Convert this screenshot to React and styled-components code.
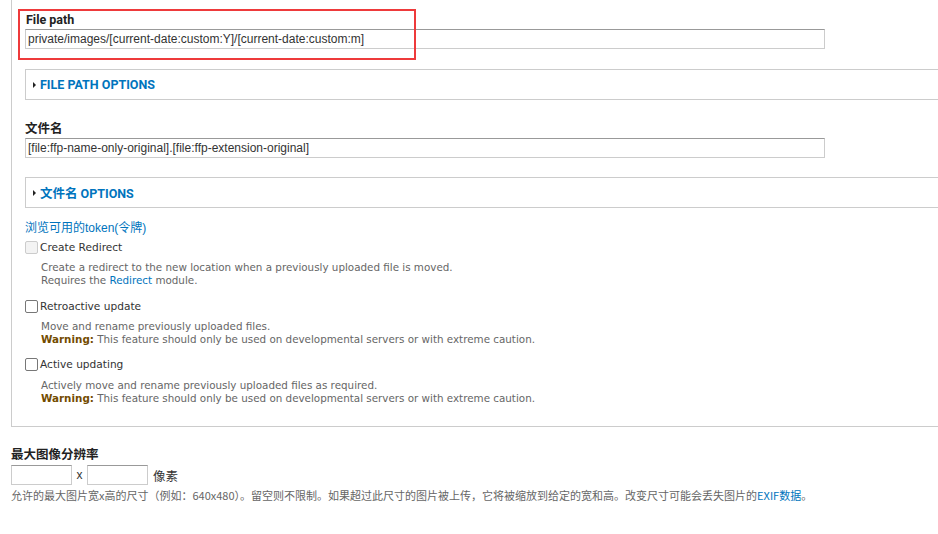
import React from "react";
import styled, { createGlobalStyle } from "styled-components";

const Global = createGlobalStyle`
  html, body { margin: 0; padding: 0; background: #fff; }
  body { overflow: hidden; width: 938px; height: 534px; }
`;

const Page = styled.div`
  padding-left: 11px;
  font-family: "DejaVu Sans", Verdana, sans-serif;
  color: #333;
`;

const Panel = styled.div`
  position: relative;
  margin-right: -30px;
  border-left: 1px solid #ccc;
  border-bottom: 1px solid #ccc;
  padding: 11px 0 21px 13px;
`;

const Highlight = styled.div`
  position: absolute;
  left: 6px;
  top: 9px;
  width: 398px;
  height: 51px;
  box-sizing: border-box;
  border: 2px solid #ee3a3b;
  pointer-events: none;
`;

const FieldLabel = styled.div`
  font-family: "Roboto", "Noto Sans CJK SC", sans-serif;
  font-weight: bold;
  font-size: 12.5px;
  line-height: 18px;
  color: #222;
  margin-top: ${(p) => p.$mt || 0}px;
  padding-left: ${(p) => p.$pl || 0}px;
`;

const TextInput = styled.div`
  box-sizing: border-box;
  width: ${(p) => p.$w}px;
  height: 20px;
  border: 1px solid #ccc;
  border-top-color: #999;
  font-family: "Liberation Sans", Arial, sans-serif;
  font-size: 12px;
  line-height: 18px;
  padding-left: 2px;
  color: #333;
  white-space: nowrap;
`;

const Details = styled.div`
  box-sizing: border-box;
  height: 31px;
  margin-top: ${(p) => p.$mt}px;
  border: 1px solid #ccc;
  border-right: none;
  display: flex;
  align-items: center;
  padding-left: 7px;
  gap: 4px;
`;

const Triangle = styled.span`
  width: 0;
  height: 0;
  border-top: 3px solid transparent;
  border-bottom: 3px solid transparent;
  border-left: 3px solid #222;
`;

const Summary = styled.span`
  font-family: "Roboto", "Noto Sans CJK SC", sans-serif;
  font-weight: bold;
  font-size: 12.5px;
  color: #0074bd;
`;

const TokenLink = styled.div`
  margin-top: 12px;
  font-family: "Liberation Sans", "Noto Sans CJK SC", sans-serif;
  font-size: 12px;
  line-height: 16px;
  color: #0074bd;
`;

const CheckRow = styled.label`
  display: flex;
  align-items: center;
  gap: 2px;
  margin-top: ${(p) => p.$mt}px;
  font-size: 10.6px;
  line-height: 16px;
  color: #333;
`;

const Box = styled.span`
  box-sizing: border-box;
  width: 13px;
  height: 13px;
  border: 1px solid ${(p) => (p.$disabled ? "#ccc" : "#777")};
  background: ${(p) => (p.$disabled ? "#f3f3f3" : "#fff")};
  border-radius: 2px;
`;

const Desc = styled.div`
  margin-top: ${(p) => p.$mt || 6}px;
  padding-left: 16px;
  font-size: 10.35px;
  line-height: 13px;
  color: #666;
`;

const Link = styled.span`
  color: #0074bd;
`;

const Warn = styled.strong`
  color: #734c00;
`;

const DimRow = styled.div`
  display: flex;
  align-items: center;
  margin-top: 1px;
  font-family: "Liberation Sans", "Noto Sans CJK SC", sans-serif;
  font-size: 12px;
`;

const Times = styled.span`
  width: 15px;
  text-align: center;
  color: #333;
`;

const Unit = styled.span`
  margin-left: 5px;
  font-family: "Noto Sans CJK SC", sans-serif;
  font-size: 12.5px;
  color: #333;
`;

const Help = styled.div`
  margin-top: 3px;
  font-family: "Noto Sans CJK SC", sans-serif;
  font-size: 11px;
  line-height: 14px;
  color: #666;
  white-space: nowrap;
`;

export default function App() {
  return (
    <Page>
      <Global />
      <Panel>
        <Highlight />
        <FieldLabel $pl={1}>File path</FieldLabel>
        <TextInput $w={800}>private/images/[current-date:custom:Y]/[current-date:custom:m]</TextInput>
        <Details $mt={20}>
          <Triangle />
          <Summary>FILE PATH OPTIONS</Summary>
        </Details>
        <FieldLabel $mt={20}>文件名</FieldLabel>
        <TextInput $w={800}>[file:ffp-name-only-original].[file:ffp-extension-original]</TextInput>
        <Details $mt={19}>
          <Triangle />
          <Summary>文件名 OPTIONS</Summary>
        </Details>
        <TokenLink>浏览可用的token(令牌)</TokenLink>
        <CheckRow $mt={3}>
          <Box $disabled />
          Create Redirect
        </CheckRow>
        <Desc>
          Create a redirect to the new location when a previously uploaded file is moved.
          <br />
          Requires the <Link>Redirect</Link> module.
        </Desc>
        <CheckRow $mt={11}>
          <Box />
          Retroactive update
        </CheckRow>
        <Desc>
          Move and rename previously uploaded files.
          <br />
          <Warn>Warning:</Warn> This feature should only be used on developmental servers or with extreme caution.
        </Desc>
        <CheckRow $mt={10}>
          <Box />
          Active updating
        </CheckRow>
        <Desc $mt={7}>
          Actively move and rename previously uploaded files as required.
          <br />
          <Warn>Warning:</Warn> This feature should only be used on developmental servers or with extreme caution.
        </Desc>
      </Panel>
      <FieldLabel $mt={19}>最大图像分辨率</FieldLabel>
      <DimRow>
        <TextInput $w={61} />
        <Times>x</Times>
        <TextInput $w={61} />
        <Unit>像素</Unit>
      </DimRow>
      <Help>
        允许的最大图片宽x高的尺寸（例如：640x480）。留空则不限制。如果超过此尺寸的图片被上传，它将被缩放到给定的宽和高。改变尺寸可能会丢失图片的<Link>EXIF数据</Link>。
      </Help>
    </Page>
  );
}
